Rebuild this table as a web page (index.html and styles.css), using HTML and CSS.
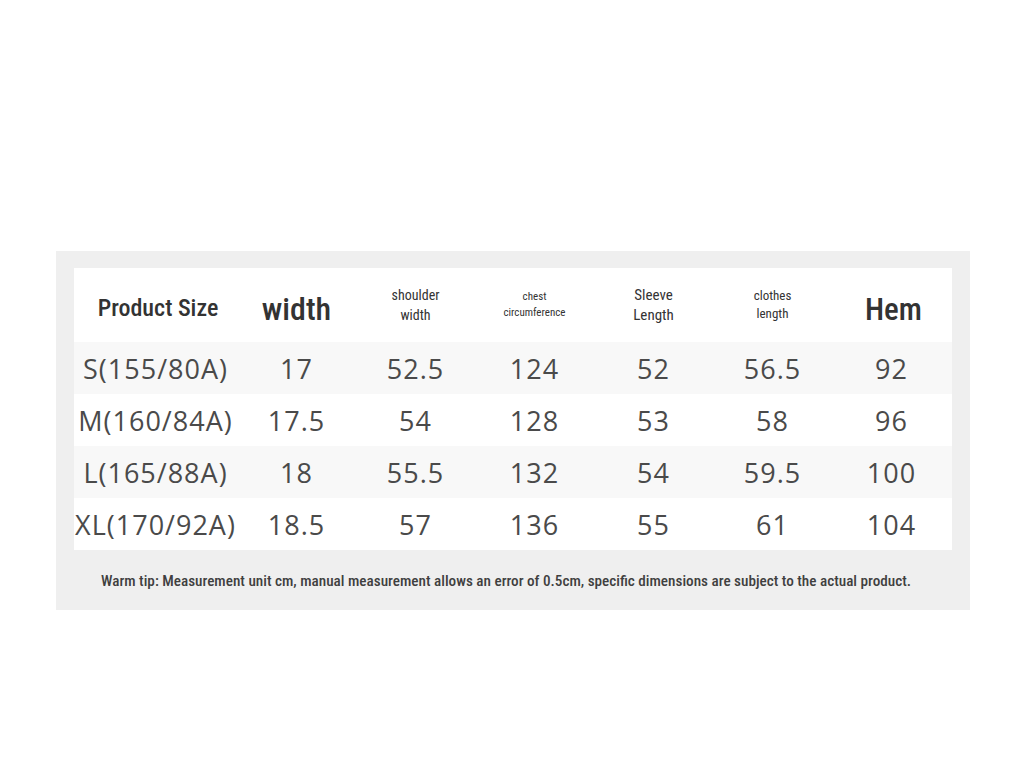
FILE: index.html
```html
<!DOCTYPE html>
<html>
<head>
<meta charset="utf-8">
<link rel="stylesheet" href="styles.css">
</head>
<body>
<div class="page">
  <section class="chart">
    <div class="table">
      <div class="row head">
        <div class="cell first h-big">Product Size</div>
        <div class="cell h-xl">width</div>
        <div class="cell h-sm">shoulder<br>width</div>
        <div class="cell h-xs">chest<br>circumference</div>
        <div class="cell h-md">Sleeve<br>Length</div>
        <div class="cell h-sm2">clothes<br>length</div>
        <div class="cell h-xl h-hem">Hem</div>
      </div>
      <div class="row alt">
        <div class="cell first">S(155/80A)</div>
        <div class="cell">17</div><div class="cell">52.5</div><div class="cell">124</div><div class="cell">52</div><div class="cell">56.5</div><div class="cell">92</div>
      </div>
      <div class="row">
        <div class="cell first">M(160/84A)</div>
        <div class="cell">17.5</div><div class="cell">54</div><div class="cell">128</div><div class="cell">53</div><div class="cell">58</div><div class="cell">96</div>
      </div>
      <div class="row alt">
        <div class="cell first">L(165/88A)</div>
        <div class="cell">18</div><div class="cell">55.5</div><div class="cell">132</div><div class="cell">54</div><div class="cell">59.5</div><div class="cell">100</div>
      </div>
      <div class="row">
        <div class="cell first">XL(170/92A)</div>
        <div class="cell">18.5</div><div class="cell">57</div><div class="cell">136</div><div class="cell">55</div><div class="cell">61</div><div class="cell">104</div>
      </div>
    </div>
    <p class="tip">Warm tip: Measurement unit cm, manual measurement allows an error of 0.5cm, specific dimensions are subject to the actual product.</p>
  </section>
</div>
</body>
</html>
```
FILE: styles.css
```css
* { box-sizing: border-box; }
html, body { margin: 0; padding: 0; background: #ffffff; }
body { width: 1024px; height: 768px; overflow: hidden; }
.page { padding: 251px 54px 0 56px; }
.chart {
  background: #efefef;
  width: 914px;
  height: 359px;
  padding: 17px 18px 0 18px;
}
.table { background: #ffffff; width: 878px; }
.row {
  display: grid;
  grid-template-columns: 163px repeat(6, 119px);
  height: 52px;
  align-items: center;
}
.row.alt { background: #f8f8f8; }
.row.head { height: 74px; }
.cell {
  text-align: center;
  font-family: "Open Sans", "Noto Sans", sans-serif;
  font-size: 27px;
  color: #4a4a4a;
  letter-spacing: 1px;
}
.head .cell {
  font-family: "Roboto Condensed", "Liberation Sans Narrow", "DejaVu Sans Condensed", sans-serif;
  color: #333333;
  letter-spacing: 0;
  font-weight: 400;
}
.head .h-big { font-size: 24px; padding-top: 6px; padding-left: 5px; font-weight: 500; }
.head .h-xl { font-size: 32px; padding-top: 8px; font-weight: 500; }
.head .h-hem { font-size: 31px; padding-left: 4px; }
.head .h-sm { font-size: 14px; line-height: 20px; }
.head .h-xs { font-size: 11px; line-height: 16px; }
.head .h-md { font-size: 15px; line-height: 20px; }
.head .h-sm2 { font-size: 13px; line-height: 18px; }
.tip {
  margin: 22px 0 0 0;
  padding-right: 14px;
  text-align: center;
  font-family: "Roboto Condensed", "Liberation Sans Narrow", "DejaVu Sans Condensed", sans-serif;
  font-size: 15.2px;
  color: #3f3f3f;
  font-weight: 500;
}
```
